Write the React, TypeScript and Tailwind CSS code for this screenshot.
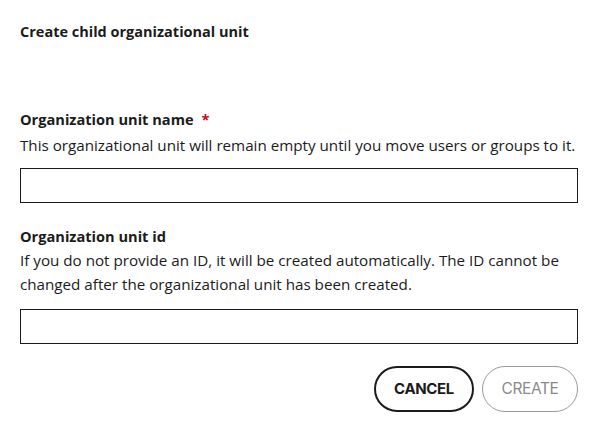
export default function App() {
    return (
        <div className="w-[598px] h-[432px] bg-white p-5 pt-5 text-[#1b1b1b] font-['Open_Sans','Liberation_Sans',sans-serif]">
            <h2 className="text-[14.5px] leading-6 font-bold">Create child organizational unit</h2>

            <div className="mt-[63px]">
                <label htmlFor="ou-name" className="block text-[14.6px] leading-6 font-bold">
                    Organization unit name <span className="ml-1 text-[#d0021b]">*</span>
                </label>
                <p className="mt-[2px] text-[15.2px] leading-6">
                    This organizational unit will remain empty until you move users or groups to it.
                </p>
                <input
                    id="ou-name"
                    type="text"
                    className="mt-[11px] block w-[558px] h-[35px] border border-[#1b1b1b] px-3 focus:outline-none"
                />
            </div>

            <div className="mt-[21px]">
                <label htmlFor="ou-id" className="block text-[14.6px] leading-6 font-bold">
                    Organization unit id
                </label>
                <p className="text-[15.2px] leading-6">
                    If you do not provide an ID, it will be created automatically. The ID cannot be
                    changed after the organizational unit has been created.
                </p>
                <input
                    id="ou-id"
                    type="text"
                    className="mt-[13px] block w-[558px] h-[35px] border border-[#1b1b1b] px-3 focus:outline-none"
                />
            </div>

            <div className="mt-[22px] flex justify-end gap-2">
                <button className="w-[100px] h-[46px] rounded-full border-2 border-[#1b1b1b] text-[15px] font-bold tracking-tight font-['Inter',sans-serif]">
                    CANCEL
                </button>
                <button
                    disabled
                    className="w-[96px] h-[46px] rounded-full border border-[#9a9a9a] text-[15.5px] text-[#8a8a8a] tracking-tight font-['Inter',sans-serif]"
                >
                    CREATE
                </button>
            </div>
        </div>
    )
}
